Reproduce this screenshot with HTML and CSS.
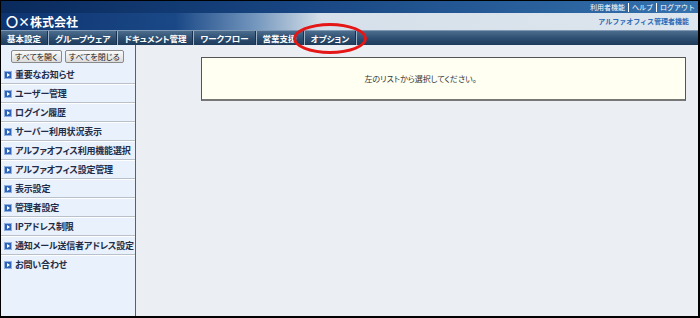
FILE: index.html
```html
<!DOCTYPE html>
<html lang="ja">
<head>
    <meta charset="UTF-8">
    <title>アルファオフィス管理者機能</title>
    <link rel="stylesheet" href="styles.css">
</head>
<body>
    <div class="frame">
        <div class="header">
            <div class="top-row">
                <div class="links">
                    <span>利用者機能</span>
                    <span>ヘルプ</span>
                    <span>ログアウト</span>
                </div>
            </div>
            <div class="title-row">
                <div class="company">〇×株式会社</div>
                <div class="role">アルファオフィス管理者機能</div>
            </div>
        </div>

        <div class="nav">
            <div class="tab">基本設定</div>
            <div class="tab">グループウェア</div>
            <div class="tab">ドキュメント管理</div>
            <div class="tab">ワークフロー</div>
            <div class="tab">営業支援</div>
            <div class="tab">オプション</div>
            <div class="highlight"></div>
        </div>

        <div class="body">
            <div class="sidebar">
                <div class="toolbar">
                    <button>すべてを開く</button>
                    <button>すべてを閉じる</button>
                </div>
                <ul class="menu">
                    <li><span class="bullet"></span>重要なお知らせ</li>
                    <li><span class="bullet"></span>ユーザー管理</li>
                    <li><span class="bullet"></span>ログイン履歴</li>
                    <li><span class="bullet"></span>サーバー利用状況表示</li>
                    <li><span class="bullet"></span>アルファオフィス利用機能選択</li>
                    <li><span class="bullet"></span>アルファオフィス設定管理</li>
                    <li><span class="bullet"></span>表示設定</li>
                    <li><span class="bullet"></span>管理者設定</li>
                    <li><span class="bullet"></span>IPアドレス制限</li>
                    <li><span class="bullet"></span>通知メール送信者アドレス設定</li>
                    <li><span class="bullet"></span>お問い合わせ</li>
                </ul>
            </div>
            <div class="main">
                <div class="notice">左のリストから選択してください。</div>
            </div>
        </div>
    </div>
</body>
</html>
```

FILE: styles.css
```css
body {
    margin: 0;
    font-family: "Noto Sans CJK JP", "Noto Sans", sans-serif;
    background-color: #fff;
}
.frame {
    width: 700px;
    height: 318px;
    box-sizing: border-box;
    border: 1px solid #000;
    border-right-width: 2px;
    border-bottom-width: 2px;
    display: flex;
    flex-direction: column;
    overflow: hidden;
}
.header {
    height: 29px;
    display: flex;
    flex-direction: column;
}
.top-row {
    height: 12px;
    background: linear-gradient(to right, #0a2a5c 0%, #174480 40%, #3572ae 100%);
    display: flex;
    justify-content: flex-end;
}
.links {
    display: flex;
    align-items: center;
    font-size: 7px;
    line-height: 12px;
    color: #fff;
}
.links span {
    padding: 0 3px;
    border-left: 1px solid #fff;
    line-height: 9px;
}
.links span:first-child {
    border-left: none;
}
.title-row {
    flex: 1;
    background: linear-gradient(to right, #0e3470 0%, #1a4886 25%, #6f93bb 36%, #d6e0ea 46%, #dde6ee 100%);
    display: flex;
    justify-content: space-between;
    align-items: center;
}
.company {
    color: #fff;
    font-size: 12px;
    font-weight: bold;
    padding-left: 5px;
    line-height: 17px;
}
.role {
    color: #2e6bb6;
    font-size: 7px;
    font-weight: bold;
    padding-right: 9px;
    margin-top: -1px;
}
.nav {
    position: relative;
    height: 14px;
    background: linear-gradient(to bottom, #4d6d8e 0%, #2f5072 50%, #1e3b5b 100%);
    border-top: 1px solid #7f99b4;
    display: flex;
}
.tab {
    color: #fff;
    font-size: 8.5px;
    font-weight: bold;
    line-height: 14px;
    padding: 0 6px;
    border-right: 1px solid #18304c;
    box-shadow: 1px 0 0 #9fb3c8;
    margin-right: 1px;
    font-feature-settings: "palt";
}
.highlight {
    position: absolute;
    left: 292px;
    top: -8px;
    width: 68px;
    height: 25px;
    border: 3px solid #e41616;
    border-radius: 50%;
}
.body {
    flex: 1;
    display: flex;
    min-height: 0;
}
.sidebar {
    width: 134px;
    background-color: #e9f1fc;
    border-right: 1px solid #5a6068;
    box-shadow: 1px 0 0 #c8d2de;
}
.toolbar {
    display: flex;
    gap: 3px;
    padding: 5px 0 3px 10px;
}
.toolbar button {
    font-family: inherit;
    font-size: 8px;
    line-height: 11px;
    padding: 0 3px;
    height: 13px;
    color: #222;
    background: linear-gradient(to bottom, #fafafa, #dcdcdc);
    border: 1px solid #8a8a8a;
    border-radius: 2px;
    font-feature-settings: "palt";
}
.menu {
    list-style: none;
    margin: 0;
    padding: 0;
}
.menu li {
    height: 17px;
    display: flex;
    align-items: center;
    gap: 3px;
    padding-left: 3px;
    font-size: 9px;
    font-weight: bold;
    color: #1e2c48;
    white-space: nowrap;
    letter-spacing: -0.2px;
    border-bottom: 1px solid #b8c0ca;
    box-shadow: 0 1px 0 #fff;
    margin-bottom: 1px;
    font-feature-settings: "palt";
}
.menu li:last-child {
    border-bottom: none;
    box-shadow: none;
}
.bullet {
    flex: none;
    width: 6px;
    height: 6px;
    background-color: #2d62b4;
    border: 1px solid #8fb0e0;
    position: relative;
}
.bullet::after {
    content: "";
    position: absolute;
    left: 2px;
    top: 1px;
    border-left: 3px solid #fff;
    border-top: 2px solid transparent;
    border-bottom: 2px solid transparent;
}
.main {
    flex: 1;
    background-color: #ebeff4;
    padding: 12px 12px 0 65px;
}
.notice {
    height: 41px;
    background-color: #fffff2;
    border: 1px solid #555;
    border-bottom: 2px solid #777;
    font-size: 8px;
    color: #333;
    display: flex;
    align-items: center;
    justify-content: center;
    padding-right: 46px;
    font-feature-settings: "palt";
}
```
